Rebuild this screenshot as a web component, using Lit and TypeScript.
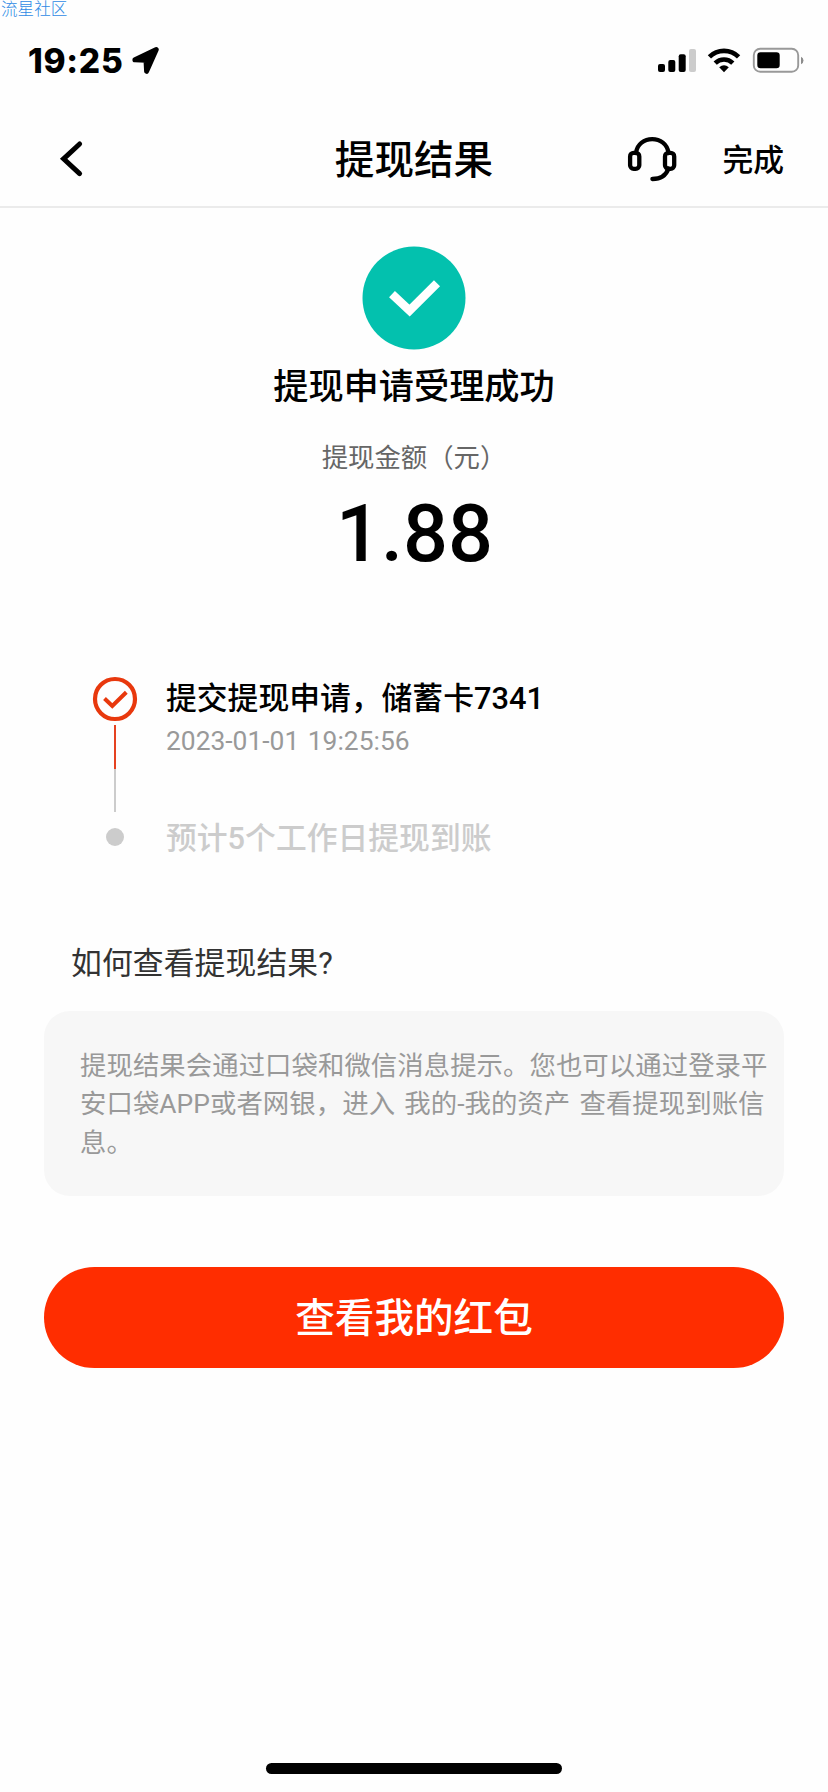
import { LitElement, html, css } from "lit";
import { customElement } from "lit/decorators.js";

@customElement("status-bar")
class StatusBar extends LitElement {
  static styles = css`
    :host { display: flex; justify-content: space-between; align-items: flex-start; height: 110px; padding: 0 23px 0 28px; box-sizing: border-box; }
    .left { display: flex; padding-top: 43px; }
    .time { font: 800 33.5px/36px Inter, sans-serif; width: 96px; white-space: nowrap; letter-spacing: 0.7px; }
    svg { display: block; flex: none; }
    .arrow { margin: 3px 0 0 7px; }
    .right { display: flex; padding-top: 46px; }
  `;
  render() {
    return html`
      <div class="left">
        <span class="time">19:25</span>
        <svg class="arrow" width="30" height="30" viewBox="0 0 30 30">
          <path d="M25.3 3.6 L15.6 25.3 L15 14.2 L3.9 13.8 Z" stroke="#000" stroke-width="5" stroke-linejoin="round" />
        </svg>
      </div>
      <div class="right">
        <svg width="148" height="28" viewBox="0 0 148 28">
          <rect x="1" y="18" width="7" height="8" rx="2" />
          <rect x="11.3" y="14" width="7" height="12" rx="2" />
          <rect x="21.7" y="8.3" width="7" height="17.7" rx="2" />
          <rect x="32" y="3" width="7" height="23" rx="2" fill="#ccc" />
          <path fill="none" stroke="#000" stroke-width="4.6" d="M52.4 10.9 a20.6 20.6 0 0 1 29.2 0 M58.2 17.1 a12.6 12.6 0 0 1 17.6 0" />
          <path d="M67 26.3 L62.2 21.3 Q67 17.2 71.8 21.3 Z" />
          <rect x="96.8" y="2.8" width="44.4" height="23" rx="6.4" fill="none" stroke="#999" stroke-width="1.9" />
          <rect x="100.3" y="6.3" width="22.4" height="16" rx="3.2" />
          <path d="M144 10.8 a4 4 0 0 1 0 7.4 Z" fill="#8c8c8c" />
        </svg>
      </div>
    `;
  }
}

@customElement("nav-bar")
class NavBar extends LitElement {
  static styles = css`
    :host { display: grid; grid-template-columns: 1fr auto 1fr; align-items: center; height: 98px; padding: 2px 44px 0; box-sizing: border-box; border-bottom: 2px solid #ebebeb; }
    svg { display: block; }
    .back { margin-left: 14px; }
    .title { font-size: 39.6px; font-weight: 500; line-height: 50px; padding-top: 3px; }
    .actions { display: flex; align-items: center; justify-content: flex-end; gap: 45px; }
    .done { font-size: 30.8px; font-weight: 500; line-height: 40px; padding-top: 4px; }
  `;
  render() {
    return html`
      <svg class="back" width="28" height="40" viewBox="0 0 28 40">
        <path d="M21.6 5 L5.6 19.8 L21.6 34.6" fill="none" stroke="#000" stroke-width="5" stroke-linecap="round" />
      </svg>
      <div class="title">提现结果</div>
      <div class="actions">
        <svg width="50" height="46" viewBox="0 0 50 46" fill="none" stroke="#000" stroke-width="4.3">
          <rect x="3.1" y="16.8" width="9.2" height="16" rx="3.6" />
          <rect x="38" y="16.8" width="9.2" height="16" rx="3.6" />
          <path d="M9 17 C11 -1.5 39.5 -1.5 41.5 17 M41.5 32.5 C39 39.5 33 43 25.4 43" stroke-linecap="round" />
        </svg>
        <span class="done">完成</span>
      </div>
    `;
  }
}

@customElement("progress-steps")
class ProgressSteps extends LitElement {
  static styles = css`
    :host { display: grid; grid-template-columns: 46px 1fr; column-gap: 28px; padding-left: 92px; }
    .rail { display: flex; flex-direction: column; align-items: center; }
    .ring { display: block; }
    .line { width: 2px; height: 43px; background: #e54221; }
    .line.on { margin-top: 3px; height: 44px; }
    .line.off { background: #ccc; }
    .dot { width: 18px; height: 18px; border-radius: 50%; background: #ccc; margin-top: 16px; }
    .text { padding-top: 1px; }
    .name { font-size: 30.8px; font-weight: 500; line-height: 44px; white-space: nowrap; }
    .time { font-size: 26.4px; line-height: 40px; color: #999; white-space: nowrap; word-spacing: 2px; }
    .later { color: #ccc; margin-top: 56px; }
  `;
  render() {
    return html`
      <div class="rail">
        <svg class="ring" width="46" height="46" viewBox="0 0 46 46" fill="none" stroke="#e8380d">
          <circle cx="23" cy="23" r="20" stroke-width="4.2" />
          <path d="M12.5 22.5 L20.3 30 L34.3 16.3" stroke-width="4" />
        </svg>
        <div class="line on"></div>
        <div class="line off"></div>
        <div class="dot"></div>
      </div>
      <div class="text">
        <div class="name">提交提现申请，储蓄卡7341</div>
        <div class="time">2023-01-01 19:25:56</div>
        <div class="name later">预计5个工作日提现到账</div>
      </div>
    `;
  }
}

@customElement("app-root")
class AppRoot extends LitElement {
  static styles = css`
    :host { display: flex; flex-direction: column; position: relative; width: 828px; height: 1792px; overflow: hidden; background: #fefefe; color: #000; font-family: Roboto, "Noto Sans CJK SC", sans-serif; }
    .mark { position: absolute; left: 1px; top: 0; font: 300 16.6px/16px "Noto Sans CJK SC", sans-serif; color: #2f8ae5; }
    .result { display: flex; flex-direction: column; align-items: center; padding-top: 38px; }
    .badge { display: block; }
    .headline { font-size: 35.2px; font-weight: 500; line-height: 50px; margin-top: 12px; }
    .label { font-size: 26.4px; line-height: 40px; color: #666; margin-top: 26px; }
    .amount { font-size: 79.2px; font-weight: 500; line-height: 94px; margin-top: 9px; padding-left: 1px; }
    progress-steps { margin-top: 95px; }
    .question { font-size: 30.8px; line-height: 44px; color: #333; margin-top: 81px; padding-left: 71px; letter-spacing: 0.1px; }
    .note { box-sizing: border-box; height: 185px; margin: 25px 44px 0; padding: 36px 10px 0 36px; border-radius: 26px; background: #f7f7f7; font-size: 26.4px; line-height: 38.3px; color: #999; letter-spacing: 0.05px; word-spacing: 2.6px; }
    .note div { white-space: nowrap; }
    .go { display: block; height: 101px; margin: 71px 44px 0; padding: 2px 0 0; border: 0; border-radius: 51px; background: #ff2d00; color: #fff; font: 500 39.6px/99px Roboto, "Noto Sans CJK SC", sans-serif; }
    .home { width: 296px; height: 11px; border-radius: 6px; background: #000; margin: auto auto 18px; }
  `;
  render() {
    return html`
      <div class="mark">流星社区</div>
      <status-bar></status-bar>
      <nav-bar></nav-bar>
      <section class="result">
        <svg class="badge" width="104" height="104" viewBox="0 0 104 104">
          <circle cx="52" cy="52" r="51.5" fill="#03c1ae" />
          <path d="M30 48.2 L47.6 64.6 L75 37.2" fill="none" stroke="#fff" stroke-width="8.6" />
        </svg>
        <div class="headline">提现申请受理成功</div>
        <div class="label">提现金额（元）</div>
        <div class="amount">1.88</div>
      </section>
      <progress-steps></progress-steps>
      <div class="question">如何查看提现结果?</div>
      <div class="note">
        <div>提现结果会通过口袋和微信消息提示。您也可以通过登录平</div>
        <div>安口袋APP或者网银，进入 我的-我的资产 查看提现到账信</div>
        <div>息。</div>
      </div>
      <button class="go">查看我的红包</button>
      <div class="home"></div>
    `;
  }
}
